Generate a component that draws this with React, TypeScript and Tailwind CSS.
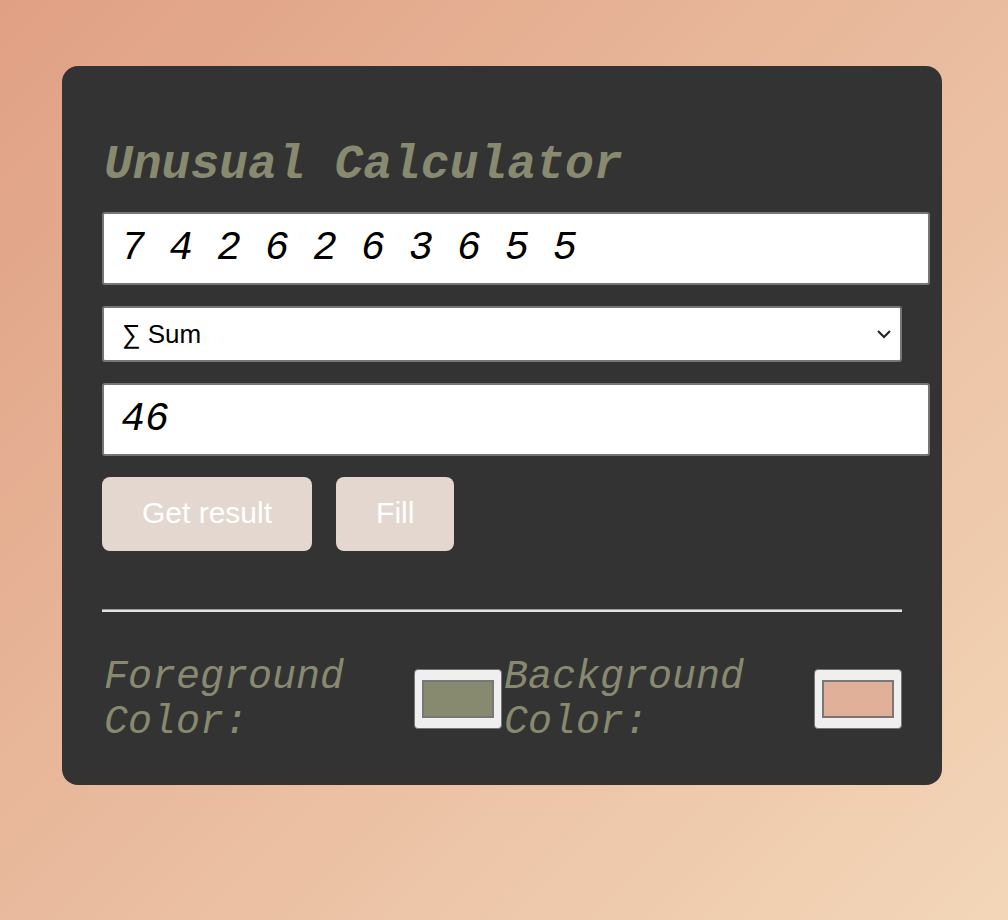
import React from "react";

const mono = "font-['Liberation_Mono','Courier_New',monospace]";

export default function App() {
  return (
    <div className="min-h-[920px] w-full bg-[linear-gradient(135deg,#e0a084_0%,#f3d6b8_100%)] pt-[66px] pl-[62px]">
      <div className="w-[880px] rounded-[16px] bg-[#333333] px-[40px] pt-[40px] pb-[40px]">
        <h1 className={`${mono} pl-[2px] text-[48px] font-bold italic leading-[54px] text-[#888a70] mt-[32px] mb-[20px]`}>
          Unusual Calculator
        </h1>
        <input
          readOnly
          value="7 4 2 6 2 6 3 6 5 5"
          className={`${mono} box-content block w-[800px] h-[45px] pl-[17px] pr-[7px] py-[12px] text-[40px] italic leading-[45px] text-black bg-white border-2 border-[#767676] rounded-[3px] outline-none`}
        />
        <div className="mt-[21px] flex h-[56px] w-[800px] items-center justify-between rounded-[3px] border-2 border-[#767676] bg-white pl-[18px] pr-[6px]">
          <span className="font-['Liberation_Sans',Arial,sans-serif] text-[26px] text-black">∑ Sum</span>
          <svg width="20" height="20" viewBox="0 0 20 20" className="text-[#222]">
            <path d="M4 7l6 6 6-6" fill="none" stroke="currentColor" strokeWidth="2" />
          </svg>
        </div>
        <input
          readOnly
          value="46"
          className={`${mono} mt-[21px] box-content block w-[800px] h-[45px] pl-[17px] pr-[7px] py-[12px] text-[40px] italic leading-[45px] text-black bg-white border-2 border-[#767676] rounded-[3px] outline-none`}
        />
        <div className="mt-[21px] flex gap-[24px]">
          <button className="font-['Liberation_Sans',Arial,sans-serif] h-[74px] rounded-[8px] bg-[#e3d7cf] px-[40px] pb-[3px] text-[30px] text-white">
            Get result
          </button>
          <button className="font-['Liberation_Sans',Arial,sans-serif] h-[74px] rounded-[8px] bg-[#e3d7cf] px-[40px] pb-[3px] text-[30px] text-white">
            Fill
          </button>
        </div>
        <div className="mt-[58px] h-[3px] w-[800px] border-t border-[#9a9a9a] bg-[#e2e2e2]" />
        <div className="mt-[43px] grid w-[800px] grid-cols-2">
          {[
            ["Foreground", "#888a70"],
            ["Background", "#e0b098"],
          ].map(([label, color]) => (
            <div key={label} className="flex items-center">
              <div className={`${mono} flex-1 pl-[2px] text-[40px] italic leading-[45px] text-[#888a70]`}>
                {label}
                <br />
                Color:
              </div>
              <div className="mb-[3px] flex h-[60px] w-[88px] items-center justify-center rounded-[4px] border border-[#767676] bg-[#efefef]">
                <div className="h-[38px] w-[72px] border-2 border-[#777]" style={{ backgroundColor: color }} />
              </div>
            </div>
          ))}
        </div>
      </div>
    </div>
  );
}
